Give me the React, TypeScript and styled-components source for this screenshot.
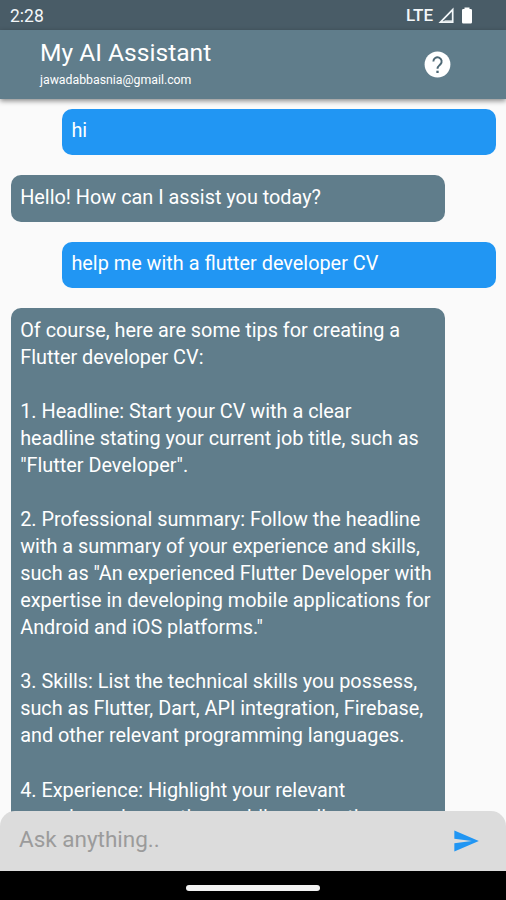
import React from "react";
import styled, { createGlobalStyle } from "styled-components";

const GlobalStyle = createGlobalStyle`
  * { box-sizing: border-box; }
  body { margin: 0; background: #000; }
`;

const Screen = styled.div`
  display: flex;
  flex-direction: column;
  width: 506px;
  height: 900px;
  overflow: hidden;
  background: #fafafa;
  font-family: Roboto, "Liberation Sans", sans-serif;
`;

const StatusBar = styled.div`
  flex: none;
  display: flex;
  align-items: center;
  height: 30px;
  padding: 1px 33px 0 10px;
  background: #495c67;
  color: #f3f7f9;
  font-size: 17.5px;
`;

const Clock = styled.span`
  flex: 1;
`;

const Network = styled.span`
  font-size: 17px;
  font-weight: 500;
  margin-right: 5px;
  padding-bottom: 1px;
`;

const AppBar = styled.header`
  flex: none;
  display: flex;
  align-items: center;
  justify-content: space-between;
  height: 69px;
  padding: 0 53px 0 40px;
  background: #607d8b;
  color: #fff;
  box-shadow: 0 2px 5px rgba(0, 0, 0, 0.45);
  z-index: 1;
`;

const Heading = styled.div`
  padding-bottom: 3px;
`;

const Title = styled.h1`
  margin: 0;
  font-size: 24.6px;
  font-weight: 400;
  line-height: 28px;
`;

const Email = styled.div`
  margin-top: 6px;
  font-size: 12.3px;
  line-height: 15px;
`;

const Messages = styled.main`
  flex: 1;
  min-height: 0;
  display: flex;
  flex-direction: column;
  gap: 20px;
  padding: 9.8px 9.8px 0 10.5px;
  overflow: hidden;
`;

const Bubble = styled.div<{ $mine?: boolean }>`
  flex: none;
  align-self: ${(p) => (p.$mine ? "flex-end" : "flex-start")};
  width: 434.5px;
  padding: 8.4px 0 11px 9.7px;
  border-radius: 10px;
  background: ${(p) => (p.$mine ? "#2196f3" : "#607d8b")};
  color: #fff;
  font-size: 19.85px;
  line-height: 27.06px;
  white-space: pre;
`;

const Composer = styled.footer`
  flex: none;
  display: flex;
  align-items: center;
  justify-content: space-between;
  height: 60px;
  margin-top: -15px;
  padding: 0 26px 0 19px;
  background: #dcdcdc;
  border-radius: 15px 15px 0 0;
  z-index: 1;
`;

const Prompt = styled.span`
  color: #9b9b9b;
  font-size: 22.5px;
  padding-bottom: 4px;
`;

const NavBar = styled.div`
  flex: none;
  display: flex;
  justify-content: center;
  height: 29px;
  padding-top: 14px;
  background: #000;
`;

const NavHandle = styled.div`
  width: 134px;
  height: 6px;
  border-radius: 3px;
  background: #f2f2f2;
`;

const tips = `Of course, here are some tips for creating a
Flutter developer CV:

1. Headline: Start your CV with a clear
headline stating your current job title, such as
"Flutter Developer".

2. Professional summary: Follow the headline
with a summary of your experience and skills,
such as "An experienced Flutter Developer with
expertise in developing mobile applications for
Android and iOS platforms."

3. Skills: List the technical skills you possess,
such as Flutter, Dart, API integration, Firebase,
and other relevant programming languages.

4. Experience: Highlight your relevant
experience in creating mobile applications`;

const messages = [
  { mine: true, text: "hi" },
  { mine: false, text: "Hello! How can I assist you today?" },
  { mine: true, text: "help me with a flutter developer CV" },
  { mine: false, text: tips },
];

export default function App() {
  return (
    <Screen>
      <GlobalStyle />
      <StatusBar>
        <Clock>2:28</Clock>
        <Network>LTE</Network>
        <svg width="35" height="18" viewBox="0 0 35 18">
          <path d="M2.5 15.1 14.7 2.7v12.4z" fill="none" stroke="#f3f7f9" strokeWidth="1.7" />
          <path d="M5 15.1h9.7v-2H7z" fill="#f3f7f9" opacity="0.6" />
          <path d="M26.5 0.5h5V2h1.2q1.3 0 1.3 1.3v11.9q0 1.3-1.3 1.3h-7.4q-1.3 0-1.3-1.3V3.3q0-1.3 1.3-1.3h1.2z" fill="#fff" />
        </svg>
      </StatusBar>
      <AppBar>
        <Heading>
          <Title>My AI Assistant</Title>
          <Email>jawadabbasnia@gmail.com</Email>
        </Heading>
        <svg width="31" height="31" viewBox="0 0 24 24" fill="none">
          <circle cx="12" cy="12" r="10" fill="#fff" />
          <path d="M8.8 9.6a3.2 3.2 0 1 1 5.5 2.2c-1.2 1.2-2.3 1.7-2.3 3.5" stroke="#4d6875" strokeWidth="1.5" />
          <path d="M11.1 16.8h1.8v1.8h-1.8z" fill="#4d6875" />
        </svg>
      </AppBar>
      <Messages>
        {messages.map((m, i) => (
          <Bubble key={i} $mine={m.mine}>{m.text}</Bubble>
        ))}
      </Messages>
      <Composer>
        <Prompt>Ask anything..</Prompt>
        <svg width="28" height="28" viewBox="0 0 24 24" fill="#2196f3">
          <path d="M2.01 21 23 12 2.01 3 2 10l15 2-15 2z" />
        </svg>
      </Composer>
      <NavBar>
        <NavHandle />
      </NavBar>
    </Screen>
  );
}
